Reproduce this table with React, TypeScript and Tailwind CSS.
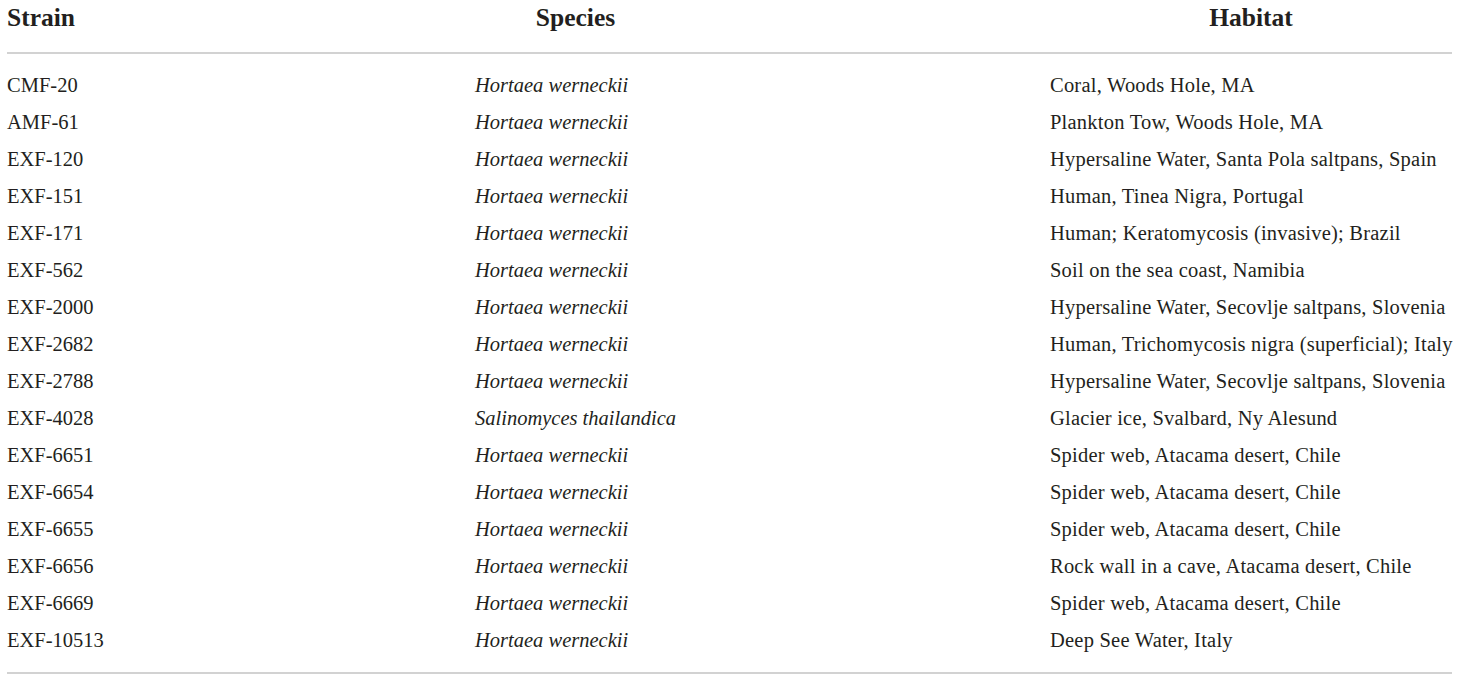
const rows: [string, string, string][] = [
  ['CMF-20', 'Hortaea werneckii', 'Coral, Woods Hole, MA'],
  ['AMF-61', 'Hortaea werneckii', 'Plankton Tow, Woods Hole, MA'],
  ['EXF-120', 'Hortaea werneckii', 'Hypersaline Water, Santa Pola saltpans, Spain'],
  ['EXF-151', 'Hortaea werneckii', 'Human, Tinea Nigra, Portugal'],
  ['EXF-171', 'Hortaea werneckii', 'Human; Keratomycosis (invasive); Brazil'],
  ['EXF-562', 'Hortaea werneckii', 'Soil on the sea coast, Namibia'],
  ['EXF-2000', 'Hortaea werneckii', 'Hypersaline Water, Secovlje saltpans, Slovenia'],
  ['EXF-2682', 'Hortaea werneckii', 'Human, Trichomycosis nigra (superficial); Italy'],
  ['EXF-2788', 'Hortaea werneckii', 'Hypersaline Water, Secovlje saltpans, Slovenia'],
  ['EXF-4028', 'Salinomyces thailandica', 'Glacier ice, Svalbard, Ny Alesund'],
  ['EXF-6651', 'Hortaea werneckii', 'Spider web, Atacama desert, Chile'],
  ['EXF-6654', 'Hortaea werneckii', 'Spider web, Atacama desert, Chile'],
  ['EXF-6655', 'Hortaea werneckii', 'Spider web, Atacama desert, Chile'],
  ['EXF-6656', 'Hortaea werneckii', 'Rock wall in a cave, Atacama desert, Chile'],
  ['EXF-6669', 'Hortaea werneckii', 'Spider web, Atacama desert, Chile'],
  ['EXF-10513', 'Hortaea werneckii', 'Deep See Water, Italy'],
];

export default function App() {
  return (
    <div className="w-[1460px] h-[681px] bg-white overflow-hidden font-['Liberation_Serif',serif] text-[#231f20]">
      <div className="ml-[7px] w-[1445px]">
        {/* Header */}
        <div className="flex pt-[4px] pb-[20px] border-b-2 border-[#d2d2d2] text-[25.5px] leading-[28px] font-bold">
          <div className="w-[468px]">Strain</div>
          <div className="w-[201px] text-center">Species</div>
          <div className="w-[374px]" />
          <div className="w-[402px] text-center">Habitat</div>
        </div>

        {/* Body */}
        <div className="pt-[12.5px] pb-[12.4px] border-b-2 border-[#d2d2d2] text-[20.5px]">
          {rows.map(([strain, species, habitat]) => (
            <div key={strain} className="flex h-[37.07px] leading-[37.07px] whitespace-nowrap">
              <div className="w-[468px]">{strain}</div>
              <div className="w-[575px] italic">{species}</div>
              <div className="w-[402px] tracking-[0.22px]">{habitat}</div>
            </div>
          ))}
        </div>
      </div>
    </div>
  );
}
